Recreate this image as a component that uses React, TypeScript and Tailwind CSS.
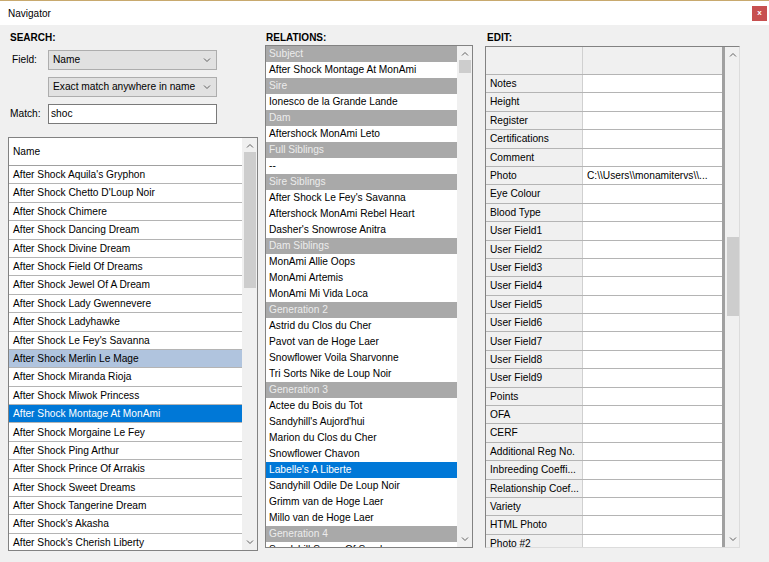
import React from "react";

const names = [
  "After Shock Aquila's Gryphon",
  "After Shock Chetto D'Loup Noir",
  "After Shock Chimere",
  "After Shock Dancing Dream",
  "After Shock Divine Dream",
  "After Shock Field Of Dreams",
  "After Shock Jewel Of A Dream",
  "After Shock Lady Gwennevere",
  "After Shock Ladyhawke",
  "After Shock Le Fey's Savanna",
  "After Shock Merlin Le Mage",
  "After Shock Miranda Rioja",
  "After Shock Miwok Princess",
  "After Shock Montage At MonAmi",
  "After Shock Morgaine Le Fey",
  "After Shock Ping Arthur",
  "After Shock Prince Of Arrakis",
  "After Shock Sweet Dreams",
  "After Shock Tangerine Dream",
  "After Shock's Akasha",
  "After Shock's Cherish Liberty",
];

// h = group header, s = selected
const relations: { t: string; k?: "h" | "s" }[] = [
  { t: "Subject", k: "h" },
  { t: "After Shock Montage At MonAmi" },
  { t: "Sire", k: "h" },
  { t: "Ionesco de la Grande Lande" },
  { t: "Dam", k: "h" },
  { t: "Aftershock MonAmi Leto" },
  { t: "Full Siblings", k: "h" },
  { t: "--" },
  { t: "Sire Siblings", k: "h" },
  { t: "After Shock Le Fey's Savanna" },
  { t: "Aftershock MonAmi Rebel Heart" },
  { t: "Dasher's Snowrose Anitra" },
  { t: "Dam Siblings", k: "h" },
  { t: "MonAmi Allie Oops" },
  { t: "MonAmi Artemis" },
  { t: "MonAmi Mi Vida Loca" },
  { t: "Generation 2", k: "h" },
  { t: "Astrid du Clos du Cher" },
  { t: "Pavot van de Hoge Laer" },
  { t: "Snowflower Voila Sharvonne" },
  { t: "Tri Sorts Nike de Loup Noir" },
  { t: "Generation 3", k: "h" },
  { t: "Actee du Bois du Tot" },
  { t: "Sandyhill's Aujord'hui" },
  { t: "Marion du Clos du Cher" },
  { t: "Snowflower Chavon" },
  { t: "Labelle's A Liberte", k: "s" },
  { t: "Sandyhill Odile De Loup Noir" },
  { t: "Grimm van de Hoge Laer" },
  { t: "Millo van de Hoge Laer" },
  { t: "Generation 4", k: "h" },
  { t: "Sandyhill Sense Of Surely" },
];

const fields = [
  "Notes",
  "Height",
  "Register",
  "Certifications",
  "Comment",
  "Photo",
  "Eye Colour",
  "Blood Type",
  "User Field1",
  "User Field2",
  "User Field3",
  "User Field4",
  "User Field5",
  "User Field6",
  "User Field7",
  "User Field8",
  "User Field9",
  "Points",
  "OFA",
  "CERF",
  "Additional Reg No.",
  "Inbreeding Coeffi...",
  "Relationship Coef...",
  "Variety",
  "HTML Photo",
  "Photo #2",
];

function Chevron({ up }: { up?: boolean }) {
  return (
    <svg width="8" height="5" viewBox="0 0 8 5" className="block">
      <path
        d={up ? "M1 4.5 L4 1.5 L7 4.5" : "M1 0.5 L4 3.5 L7 0.5"}
        fill="none"
        stroke="#606060"
        strokeWidth="1"
      />
    </svg>
  );
}

function ScrollBar({ thumbTop, thumbH }: { thumbTop: number; thumbH: number }) {
  return (
    <div className="relative w-[15px] shrink-0 bg-[#f0f0f0] h-full">
      <div className="absolute top-[5px] left-[4px]">
        <Chevron up />
      </div>
      <div
        className="absolute left-[2px] right-[1px] bg-[#cdcdcd]"
        style={{ top: thumbTop, height: thumbH }}
      />
      <div className="absolute bottom-[5px] left-[4px]">
        <Chevron />
      </div>
    </div>
  );
}

function Select({ value }: { value: string }) {
  return (
    <div className="w-[169px] h-[20px] bg-[#e1e1e1] border border-[#adadad] flex items-center justify-between pl-[4px] pr-[5px]">
      <span>{value}</span>
      <Chevron />
    </div>
  );
}

export default function App() {
  return (
    <div className="w-[769px] h-[562px] bg-[#f0f0f0] overflow-hidden text-black text-[10.2px] font-['Liberation_Sans',Arial,sans-serif]">
      {/* title bar */}
      <div className="h-[25px] bg-white border-t border-[#c8a96e] flex items-center justify-between pl-[8px] pr-[2px]">
        <span className="text-[10px]">Navigator</span>
        <div className="w-[15px] h-[15px] bg-[#c75050] text-white text-[8px] font-bold flex items-center justify-center leading-none">
          x
        </div>
      </div>

      <div className="flex pl-[8px] pt-[6px]">
        {/* SEARCH */}
        <div className="w-[250px] shrink-0 flex flex-col">
          <div className="h-[13px] leading-[13px] font-bold text-[10px] pl-[2px]">SEARCH:</div>
          <div className="mt-[6px] flex items-center">
            <span className="w-[40px] pl-[4px]">Field:</span>
            <Select value="Name" />
          </div>
          <div className="mt-[7px] flex items-center">
            <span className="w-[40px]" />
            <Select value="Exact match anywhere in name" />
          </div>
          <div className="mt-[7px] flex items-center">
            <span className="w-[40px] pl-[2px]">Match:</span>
            <div className="w-[169px] h-[20px] bg-white border border-[#7a7a7a] flex items-center pl-[2px]">
              shoc
            </div>
          </div>
          <div className="mt-[13px] h-[414px] border border-[#828282] bg-white flex overflow-hidden">
            <div className="flex-1 flex flex-col overflow-hidden">
              <div className="h-[28px] shrink-0 border-b border-[#a0a0a0] flex items-center pl-[4px]">
                Name
              </div>
              {names.map((n, i) => (
                <div
                  key={n}
                  className={
                    "h-[18.4px] shrink-0 border-b border-[#b4b4b4] flex items-center pl-[4px] whitespace-nowrap " +
                    (i === 13 ? "bg-[#0078d7] text-white" : i === 10 ? "bg-[#b0c4de]" : "")
                  }
                >
                  {n}
                </div>
              ))}
            </div>
            <ScrollBar thumbTop={14} thumbH={136} />
          </div>
        </div>

        {/* RELATIONS */}
        <div className="w-[208px] ml-[7px] shrink-0 flex flex-col">
          <div className="h-[13px] leading-[13px] font-bold text-[10px] pl-[1px]">RELATIONS:</div>
          <div className="mt-[1px] h-[503px] border border-[#828282] bg-white flex overflow-hidden">
            <div className="flex-1 flex flex-col overflow-hidden">
              {relations.map((r, i) => (
                <div
                  key={i}
                  className={
                    "h-[16px] shrink-0 flex items-center pl-[3px] whitespace-nowrap " +
                    (r.k === "h"
                      ? "bg-[#a9a9a9] text-[#ececec]"
                      : r.k === "s"
                      ? "bg-[#0078d7] text-white"
                      : "")
                  }
                >
                  {r.t}
                </div>
              ))}
            </div>
            <ScrollBar thumbTop={14} thumbH={13} />
          </div>
        </div>

        {/* EDIT */}
        <div className="w-[255px] ml-[12px] shrink-0 flex flex-col">
          <div className="h-[13px] leading-[13px] font-bold text-[10px] pl-[2px]">EDIT:</div>
          <div className="mt-[2px] h-[502px] border-t border-l border-[#828282] border-r border-r-[#dcdcdc] border-b border-b-[#dcdcdc] flex overflow-hidden">
            <div className="w-[239px] shrink-0 flex flex-col overflow-hidden border-r-[3px] border-[#a0a0a0]">
              <div className="h-[28px] shrink-0 flex bg-[#f0f0f0] border-b border-[#b4b4b4]">
                <div className="w-[97px] border-r border-[#d0d0d0]" />
                <div className="flex-1" />
              </div>
              {fields.map((f) => (
                <div key={f} className="h-[18.4px] shrink-0 flex border-b border-[#b4b4b4]">
                  <div className="w-[97px] bg-[#f0f0f0] border-r border-[#d0d0d0] flex items-center pl-[4px] whitespace-nowrap overflow-hidden">
                    {f}
                  </div>
                  <div className="flex-1 bg-white flex items-center pl-[4px] whitespace-nowrap overflow-hidden">
                    {f === "Photo" ? "C:\\\\Users\\\\monamitervs\\\\..." : ""}
                  </div>
                </div>
              ))}
            </div>
            <ScrollBar thumbTop={190} thumbH={79} />
          </div>
        </div>
      </div>
    </div>
  );
}
